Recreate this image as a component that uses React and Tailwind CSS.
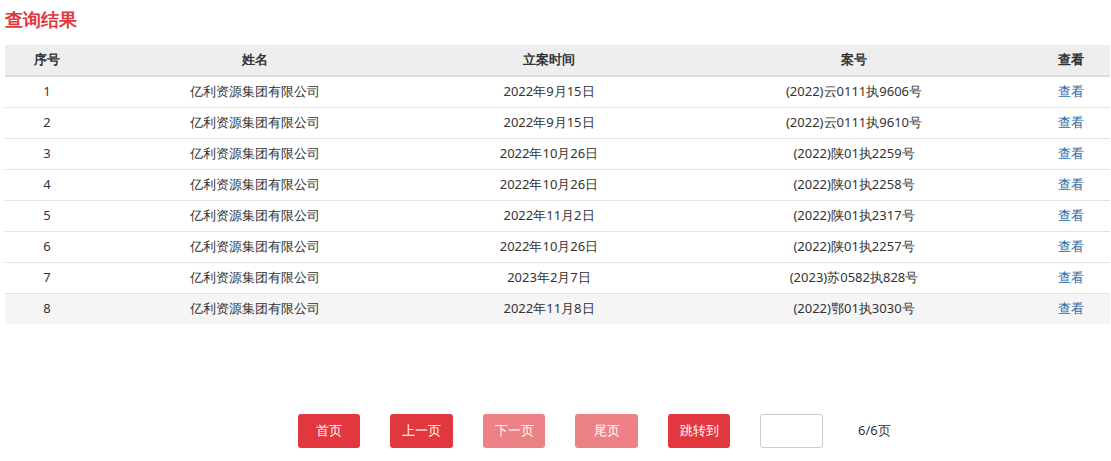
const rows = [
  ['1', '2022年9月15日', '(2022)云0111执9606号'],
  ['2', '2022年9月15日', '(2022)云0111执9610号'],
  ['3', '2022年10月26日', '(2022)陕01执2259号'],
  ['4', '2022年10月26日', '(2022)陕01执2258号'],
  ['5', '2022年11月2日', '(2022)陕01执2317号'],
  ['6', '2022年10月26日', '(2022)陕01执2257号'],
  ['7', '2023年2月7日', '(2023)苏0582执828号'],
  ['8', '2022年11月8日', '(2022)鄂01执3030号'],
];

export default function App() {
  return (
    <div className="w-[1111px] h-[461px] bg-white text-[13px] text-[#333] font-['Liberation_Sans','Noto_Sans_CJK_SC',sans-serif]">
      <h2 className="pl-[5px] pt-[6px] h-[45px] text-[18px] font-bold text-[#e0383e]">查询结果</h2>
      <table className="ml-[5px] w-[1105px] border-collapse table-fixed">
        <colgroup>
          <col className="w-[84px]" /><col className="w-[332px]" /><col className="w-[256px]" /><col className="w-[354px]" /><col className="w-[79px]" />
        </colgroup>
        <thead>
          <tr className="bg-[#eeeeee] h-[31px] border-b-2 border-[#dddddd] font-bold">
            <th>序号</th><th>姓名</th><th>立案时间</th><th>案号</th><th>查看</th>
          </tr>
        </thead>
        <tbody>
          {rows.map((r, i) => (
            <tr key={r[0]} className={`h-[31px] text-center ${i === 7 ? 'bg-[#f5f5f5]' : 'border-b border-[#e3e3e3]'}`}>
              <td>{r[0]}</td><td>亿利资源集团有限公司</td><td>{r[1]}</td><td>{r[2]}</td>
              <td className="text-[#2a6ca8]">查看</td>
            </tr>
          ))}
        </tbody>
      </table>
      <div className="flex items-center mt-[90px] pl-[298px] gap-[30px] text-[13px]">
        <button className="w-[62px] h-[34px] rounded-[3px] bg-[#e2373f] text-white">首页</button>
        <button className="w-[63px] h-[34px] rounded-[3px] bg-[#e2373f] text-white">上一页</button>
        <button className="w-[62px] h-[34px] rounded-[3px] bg-[#ec8186] text-white">下一页</button>
        <button className="w-[63px] h-[34px] rounded-[3px] bg-[#ec8186] text-white">尾页</button>
        <button className="w-[62px] h-[34px] rounded-[3px] bg-[#e2373f] text-white">跳转到</button>
        <input className="w-[63px] h-[34px] rounded-[3px] border border-[#cccccc]" />
        <span className="ml-[5px]">6/6页</span>
      </div>
    </div>
  );
}
